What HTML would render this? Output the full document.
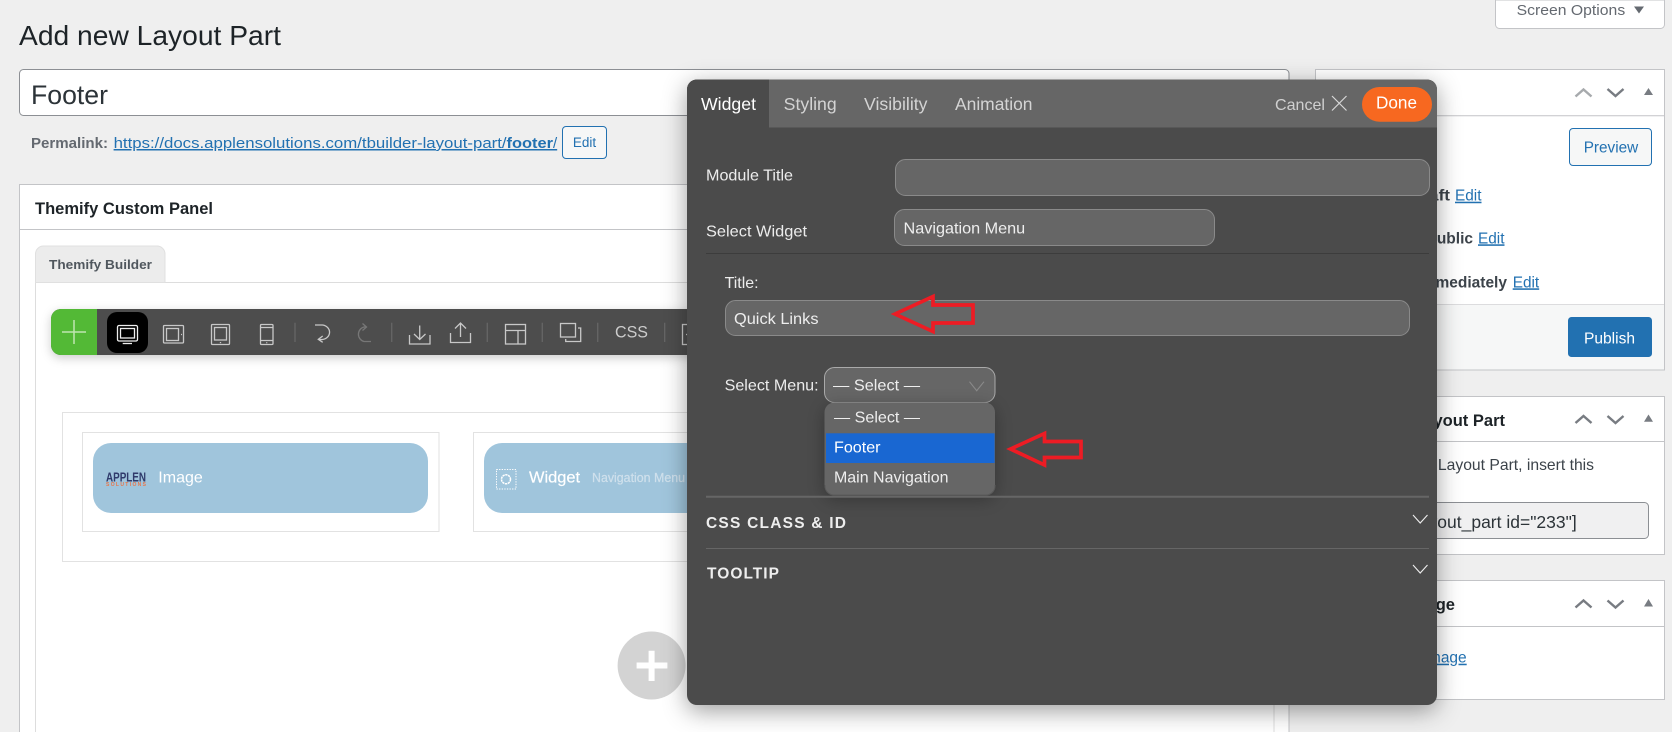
<!DOCTYPE html>
<html lang="en">
<head>
<meta charset="utf-8">
<title>Add new Layout Part</title>
<style>
html,body{margin:0;padding:0;width:1672px;height:732px;overflow:hidden;background:#efefef}
svg{display:block;position:absolute;left:0;top:0;overflow:hidden}
text{font-family:"Liberation Sans",Arial,sans-serif;white-space:pre}
.b{font-weight:700}
.lk{fill:#2271b1;text-decoration:underline}
.ic{fill:none;stroke:#c8c8c8;stroke-width:1.3}
.sc{fill:none;stroke:#787c82;stroke-width:2.4}
.lb{fill:#ececec;font-size:16px}
.fb{fill:#eee;font-size:16px}
.ta{fill:#d4d4d4;font-size:17.3px}
.fl{fill:#666;stroke:#8a8a8a;stroke-width:1}
.ar{fill:none;stroke:#ed1c24;stroke-width:3.7;stroke-linejoin:miter}
</style>
</head>
<body>
<svg width="1672" height="732" viewBox="0 0 1672 732" xmlns="http://www.w3.org/2000/svg">
<defs>
<filter id="ms" x="-10%" y="-10%" width="120%" height="120%"><feDropShadow dx="0" dy="6" stdDeviation="12" flood-color="#000" flood-opacity=".38"/></filter>
<filter id="ts" x="-5%" y="-40%" width="110%" height="190%"><feDropShadow dx="0" dy="3" stdDeviation="5" flood-color="#000" flood-opacity=".2"/></filter>
<filter id="ds" x="-30%" y="-30%" width="160%" height="170%"><feDropShadow dx="0" dy="4" stdDeviation="9" flood-color="#000" flood-opacity=".3"/></filter>
</defs>

<rect width="1672" height="732" fill="#efefef"/>

<!-- Page title -->
<text x="19" y="45" font-size="28" fill="#1d2327" textLength="262" lengthAdjust="spacingAndGlyphs">Add new Layout Part</text>

<!-- Screen options -->
<path d="M1495.500 0V24.500a4 4 0 0 0 4 4H1660.500a4 4 0 0 0 4-4V0Z" fill="#fff" stroke="#c3c4c7"/>
<text x="1516.700" y="15" font-size="15" fill="#646970" textLength="108.500" lengthAdjust="spacingAndGlyphs">Screen Options</text>
<path d="M1634 6.500H1644L1639 13.500Z" fill="#646970"/>

<!-- Title input -->
<rect x="19.500" y="69.500" width="1269.500" height="46" rx="4" fill="#fff" stroke="#8c8f94"/>
<text x="31" y="104" font-size="27" fill="#2c3338" textLength="77" lengthAdjust="spacingAndGlyphs">Footer</text>

<!-- Permalink -->
<text x="31" y="148" font-size="15" class="b" fill="#646970" textLength="77" lengthAdjust="spacingAndGlyphs">Permalink:</text>
<text x="113.600" y="148" font-size="15" class="lk" textLength="393" lengthAdjust="spacingAndGlyphs">https://docs.applensolutions.com/tbuilder-layout-part/</text>
<text x="506.500" y="148" font-size="15" class="lk b" textLength="46.500" lengthAdjust="spacingAndGlyphs">footer</text>
<text x="553" y="148" font-size="15" class="lk">/</text>
<rect x="562.500" y="126.500" width="44" height="32" rx="3.500" fill="#f6f7f7" stroke="#2271b1"/>
<text x="584.500" y="147" font-size="13.500" fill="#2271b1" text-anchor="middle">Edit</text>

<!-- Custom panel -->
<path d="M19.500 732V184.500H1289V732Z" fill="#fff"/>
<path d="M19.500 732V184.500H1289V732" fill="none" stroke="#c3c4c7"/>
<line x1="20" y1="229.500" x2="1289" y2="229.500" stroke="#c3c4c7"/>
<text x="35" y="214" font-size="16.500" class="b" fill="#1d2327" textLength="178" lengthAdjust="spacingAndGlyphs">Themify Custom Panel</text>

<!-- Builder tab -->
<path d="M35.500 732V282.500H1274V732" fill="#fff" stroke="#ddd"/>
<path d="M35.500 282.500V254a8 8 0 0 1 8-8H157a8 8 0 0 1 8 8V282.500Z" fill="#ececec" stroke="#e0e0e0"/>
<text x="49" y="269" font-size="13" class="b" fill="#50575e" textLength="103" lengthAdjust="spacingAndGlyphs">Themify Builder</text>

<!-- Toolbar -->
<g filter="url(#ts)">
<path d="M61 309H720V355H61a10 10 0 0 1-10-10V319a10 10 0 0 1 10-10Z" fill="#4d4d4d"/>
</g>
<path d="M61 309H97V355H61a10 10 0 0 1-10-10V319a10 10 0 0 1 10-10Z" fill="#53b936"/>
<path d="M62 332H86M74 320V344" stroke="#bfe6b0" stroke-width="1.500" fill="none"/>
<rect x="107" y="312" width="41" height="41" rx="10" fill="#000"/>
<g class="ic">
<rect x="117.500" y="325.500" width="20" height="15.500" rx="1.500" stroke="#eee"/>
<rect x="120.500" y="328.500" width="14" height="9.500" stroke="#eee"/>
<path d="M122.700 343.500H132" stroke="#eee"/>
<rect x="163.500" y="325.500" width="20" height="17.500" rx="1"/>
<rect x="166.500" y="328.500" width="12" height="12"/>
<path d="M181 334.500h1"/>
<rect x="211.500" y="324.500" width="18" height="20" rx="1"/>
<rect x="214.500" y="327.500" width="12" height="12.500"/>
<path d="M220.500 342v1.200"/>
<rect x="260.500" y="324.500" width="12.500" height="20" rx="1"/>
<path d="M260.500 327.500H273M260.500 340.500H273M266.700 342.300v1"/>
<path d="M295 322.700V342M391.700 322.700V342M487.300 322.700V342M542.300 322.700V342M597.700 322.700V342M664.700 322.700V342" stroke="#666"/>
<path d="M315 325H322.500A8 7.300 0 0 1 322.500 339.500H319M322.700 336L318.300 339.300L322.700 342.300"/>
<path d="M371 341.500H364A7.500 7.500 0 0 1 364 327H366M362.500 323.500L366.500 327L362.500 330.500" stroke="#777"/>
<path d="M409.500 335V344H430V335M419.700 325.500V339M414 334L419.700 339.500L425.500 334"/>
<path d="M450.500 333V342.500H470.500V333M460.500 323V337M455 328.500L460.500 323L466 328.500"/>
<rect x="505.500" y="324.500" width="20" height="19.500"/>
<path d="M505.500 330.500H525.500M518 330.500V344"/>
<rect x="560.500" y="323.500" width="15" height="13.500"/>
<path d="M578 328H580.700V341.500H565.700V339"/>
<rect x="682.500" y="324.500" width="14" height="20"/>
<path d="M686 334.500h2"/>
</g>
<text x="615" y="337.700" font-size="16.500" fill="#ccc" textLength="33" lengthAdjust="spacingAndGlyphs">CSS</text>

<!-- Row -->
<rect x="62.500" y="412.500" width="1000" height="149" fill="#fff" stroke="#e2e2e2"/>
<rect x="82.500" y="432.500" width="356.500" height="99" fill="#fff" stroke="#e2e2e2"/>
<rect x="473.500" y="432.500" width="356.500" height="99" fill="#fff" stroke="#e2e2e2"/>
<rect x="93" y="443" width="335" height="70" rx="18" fill="#a0c5dc"/>
<rect x="484" y="443" width="335" height="70" rx="18" fill="#a0c5dc"/>
<text x="106" y="481.500" font-size="12.500" class="b" fill="#2f3a6b" textLength="40" lengthAdjust="spacingAndGlyphs">APPLEN</text>
<text x="106" y="485.800" font-size="5" class="b" fill="#e8764a" textLength="40" lengthAdjust="spacing">SOLUTIONS</text>
<text x="158.300" y="482.700" font-size="16" fill="#fff" textLength="44.500" lengthAdjust="spacingAndGlyphs">Image</text>
<rect x="496.500" y="469.500" width="19.500" height="19.500" fill="none" stroke="#fff" stroke-width="1" stroke-dasharray="1.300 1.300"/>
<circle cx="506" cy="479.300" r="4.500" fill="none" stroke="#fff" stroke-width="1.500" stroke-dasharray="2.300 .6"/>
<text x="529" y="482.700" font-size="16" fill="#fff" textLength="51" lengthAdjust="spacingAndGlyphs" stroke="#fff" stroke-width=".2">Widget</text>
<text x="592" y="482" font-size="12.500" fill="#cfe0ec" textLength="93" lengthAdjust="spacingAndGlyphs" stroke="#cfe0ec" stroke-width=".2">Navigation Menu</text>

<!-- Add row -->
<circle cx="651.600" cy="665.500" r="34" fill="#d3d3d3"/>
<path d="M636.600 665.500H667.400M651.600 650.700V681" stroke="#fff" stroke-width="6" fill="none"/>

<!-- Publish box -->
<rect x="1315.500" y="69.500" width="349" height="300.500" fill="#fff" stroke="#c3c4c7"/>
<line x1="1316" y1="115.700" x2="1664" y2="115.700" stroke="#c3c4c7"/>
<path d="M1575.500 96.500L1583.500 89.500L1591.500 96.500" class="sc" style="stroke:#a7aaad"/>
<path d="M1607.500 89L1615.500 96L1623.500 89" class="sc"/>
<path d="M1644 95H1653L1648.500 88Z" fill="#787c82"/>
<rect x="1569.500" y="128.500" width="82" height="37" rx="3.500" fill="#f6f7f7" stroke="#2271b1"/>
<text x="1583.700" y="152.700" font-size="15.300" fill="#2271b1" textLength="54.500" lengthAdjust="spacingAndGlyphs">Preview</text>
<text x="1410" y="200.700" font-size="15.500" class="b" fill="#3c434a" textLength="40" lengthAdjust="spacingAndGlyphs">Draft</text>
<text x="1455" y="200.700" font-size="15.500" class="lk" textLength="26.500" lengthAdjust="spacingAndGlyphs">Edit</text>
<text x="1473" y="243.300" font-size="15.500" class="b" fill="#3c434a" text-anchor="end">Public</text>
<text x="1478" y="243.300" font-size="15.500" class="lk" textLength="26.500" lengthAdjust="spacingAndGlyphs">Edit</text>
<text x="1507" y="287.300" font-size="15.500" class="b" fill="#3c434a" text-anchor="end">Immediately</text>
<text x="1512.700" y="287.300" font-size="15.500" class="lk" textLength="26.500" lengthAdjust="spacingAndGlyphs">Edit</text>
<rect x="1316" y="304.500" width="348" height="65" fill="#f6f7f7"/>
<line x1="1316" y1="304.500" x2="1664" y2="304.500" stroke="#dcdcde"/>
<rect x="1568" y="317" width="84" height="40" rx="3.500" fill="#2271b1"/>
<text x="1584" y="343.300" font-size="15.500" fill="#fff" textLength="51" lengthAdjust="spacingAndGlyphs">Publish</text>

<!-- Layout part box -->
<rect x="1315.500" y="396.500" width="349" height="158" fill="#fff" stroke="#c3c4c7"/>
<line x1="1316" y1="441.500" x2="1664" y2="441.500" stroke="#c3c4c7"/>
<text x="1505" y="426" font-size="16.500" class="b" fill="#1d2327" text-anchor="end">Layout Part</text>
<path d="M1575.500 423L1583.500 416L1591.500 423" class="sc"/>
<path d="M1607.500 416L1615.500 423L1623.500 416" class="sc"/>
<path d="M1644 421.700H1653L1648.500 414.500Z" fill="#787c82"/>
<text x="1594" y="470" font-size="15.700" fill="#3c434a" text-anchor="end">To display this Layout Part, insert this</text>
<rect x="1380" y="502.500" width="268.500" height="36" rx="4" fill="#f0f0f1" stroke="#8c8f94"/>
<text x="1576.700" y="528" font-size="17.500" fill="#2c3338" text-anchor="end">[themify_layout_part id="233"]</text>

<!-- Featured image box -->
<rect x="1315.500" y="580.500" width="349" height="119" fill="#fff" stroke="#c3c4c7"/>
<line x1="1316" y1="626.500" x2="1664" y2="626.500" stroke="#c3c4c7"/>
<text x="1455" y="610" font-size="16.500" class="b" fill="#1d2327" text-anchor="end">Featured image</text>
<path d="M1575.500 607.500L1583.500 600.500L1591.500 607.500" class="sc"/>
<path d="M1607.500 600.500L1615.500 607.500L1623.500 600.500" class="sc"/>
<path d="M1644 606.500H1653L1648.500 599Z" fill="#787c82"/>
<text x="1466.700" y="662.700" font-size="15.500" class="lk" text-anchor="end">Set featured image</text>

<!-- Modal -->
<rect x="687" y="79.500" width="750" height="625.500" rx="10" fill="#4b4b4b" filter="url(#ms)"/>
<path d="M697 79.500H1427a10 10 0 0 1 10 10V127.500H687V89.500a10 10 0 0 1 10-10Z" fill="#666"/>
<path d="M697 79.500H769V127.500H687V89.500a10 10 0 0 1 10-10Z" fill="#4b4b4b"/>
<text x="701" y="110" font-size="17.300" fill="#fff" textLength="55" lengthAdjust="spacingAndGlyphs">Widget</text>
<text x="783.700" y="110" class="ta" textLength="53" lengthAdjust="spacingAndGlyphs">Styling</text>
<text x="864" y="110" class="ta" textLength="63.500" lengthAdjust="spacingAndGlyphs">Visibility</text>
<text x="955" y="110" class="ta" textLength="77.500" lengthAdjust="spacingAndGlyphs">Animation</text>
<text x="1275" y="110" font-size="16" fill="#d0d0d0" textLength="50" lengthAdjust="spacingAndGlyphs">Cancel</text>
<path d="M1332 96L1346.500 110.500M1346.500 96L1332 110.500" stroke="#d8d8d8" stroke-width="1.200" fill="none"/>
<rect x="1362" y="87" width="70" height="34.700" rx="17.350" fill="#f76820"/>
<text x="1376" y="108.700" font-size="17.200" fill="#fff" textLength="41" lengthAdjust="spacingAndGlyphs">Done</text>

<text x="706" y="180.700" class="lb" textLength="87" lengthAdjust="spacingAndGlyphs">Module Title</text>
<rect x="895.500" y="159.500" width="534" height="36" rx="10" class="fl"/>
<text x="706" y="236.700" class="lb" textLength="101" lengthAdjust="spacingAndGlyphs">Select Widget</text>
<rect x="894.500" y="209.500" width="320" height="36" rx="10" class="fl"/>
<text x="903.500" y="233.300" class="fb" textLength="121.700" lengthAdjust="spacingAndGlyphs">Navigation Menu</text>
<line x1="706" y1="253.500" x2="1429" y2="253.500" stroke="#3c3c3c" stroke-width="1"/>

<text x="724.600" y="288" class="lb" textLength="34" lengthAdjust="spacingAndGlyphs">Title:</text>
<rect x="725.500" y="300.500" width="684" height="35" rx="10" class="fl"/>
<text x="734" y="324" class="fb" textLength="84.500" lengthAdjust="spacingAndGlyphs">Quick Links</text>
<path d="M895 314L933 296.500V305H973V323H933V331.500Z" class="ar"/>

<text x="724.600" y="390.700" class="lb" textLength="94" lengthAdjust="spacingAndGlyphs">Select Menu:</text>
<rect x="824.500" y="367.500" width="170.500" height="35" rx="10" fill="#666" stroke="#aaa"/>
<text x="833" y="390.700" class="fb" textLength="87" lengthAdjust="spacingAndGlyphs">— Select —</text>
<path d="M969.500 381.700L976.700 390.700L984 381.700" fill="none" stroke="#8a8a8a" stroke-width="1.100"/>

<g filter="url(#ds)">
<rect x="824.500" y="402.500" width="170.500" height="92.500" rx="10" fill="#666"/>
</g>
<path d="M825 485v1a9 9 0 0 0 9 9h152a9 9 0 0 0 9-9v-1" fill="none" stroke="#5a5a5a"/>
<text x="834" y="422.700" class="fb" textLength="86" lengthAdjust="spacingAndGlyphs">— Select —</text>
<rect x="826" y="433.300" width="168.600" height="29.700" fill="#1967d2"/>
<text x="834" y="452.700" font-size="16" fill="#fff" textLength="46.500" lengthAdjust="spacingAndGlyphs">Footer</text>
<text x="834" y="482.700" class="fb" textLength="114.500" lengthAdjust="spacingAndGlyphs">Main Navigation</text>
<path d="M1010.500 449L1044.500 433.500V441.500H1081V457.500H1044.500V465Z" class="ar"/>

<line x1="706" y1="496.700" x2="1429" y2="496.700" stroke="#666" stroke-width="2"/>
<text x="706" y="528" font-size="15.500" class="b" fill="#eee" textLength="140" lengthAdjust="spacing">CSS CLASS &amp; ID</text>
<path d="M1413 515L1420.200 523L1427.500 515" fill="none" stroke="#eee" stroke-width="1.100"/>
<line x1="706" y1="548.500" x2="1429" y2="548.500" stroke="#666"/>
<text x="707" y="578.300" font-size="15.500" class="b" fill="#eee" textLength="72" lengthAdjust="spacing">TOOLTIP</text>
<path d="M1413 565L1420.200 573L1427.500 565" fill="none" stroke="#eee" stroke-width="1.100"/>
</svg>
</body>
</html>
